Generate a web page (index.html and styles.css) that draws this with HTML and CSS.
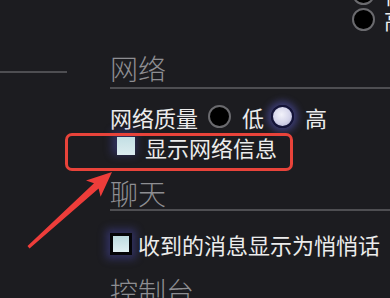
FILE: index.html
```html
<!DOCTYPE html>
<html lang="zh-CN">
<head>
<meta charset="utf-8">
<link rel="stylesheet" href="styles.css">
</head>
<body>
<div class="page">
  <div class="side"><div class="side-line"></div></div>
  <div class="main">
    <div class="prev">
      <div class="prev-row"><span class="radio"></span><span class="prev-label">低</span></div>
      <div class="prev-row"><span class="radio"></span><span class="prev-label">高</span></div>
    </div>

    <div class="section-title st-net">网络</div>
    <div class="row row-quality">
      <span class="label">网络质量</span>
      <span class="radio r1"></span><span class="opt">低</span>
      <span class="radio radio-on r2"></span><span class="opt">高</span>
    </div>
    <div class="row row-netinfo">
      <span class="check check-plain"></span><span class="label">显示网络信息</span>
    </div>

    <div class="section-title st-chat">聊天</div>
    <div class="row row-whisper">
      <span class="check check-box"></span><span class="label">收到的消息显示为悄悄话</span>
    </div>

    <div class="section-title st-console">控制台</div>
  </div>
</div>

<div class="highlight"></div>
<svg class="arrow" width="390" height="298" viewBox="0 0 390 298">
  <polygon points="27.5,246 94,183.3 86,180.4 112,172 100.6,196.8 98.6,188.5 29.5,248.5" fill="#ee3d3a"/>
</svg>
</body>
</html>
```

FILE: styles.css
```css
html, body {
  margin: 0;
  padding: 0;
}
body {
  width: 390px;
  height: 298px;
  overflow: hidden;
  background: #1c1c20;
  font-family: "Noto Sans CJK SC", "Noto Sans", sans-serif;
  color: #ececec;
  position: relative;
}
.page {
  display: flex;
  width: 390px;
}
.side {
  width: 67px;
  flex: none;
  padding-top: 71px;
}
.side-line {
  height: 2px;
  background: #4e4e52;
}
.main {
  margin-left: 43px;
  flex: 1;
  min-width: 0;
}
.prev {
  margin-top: -19px;
  padding-left: 242px;
}
.prev-row {
  height: 25.5px;
  display: flex;
  align-items: center;
  white-space: nowrap;
}
.prev-label {
  font-size: 22px;
  line-height: 22px;
  margin-left: 9px;
}
.radio {
  box-sizing: border-box;
  width: 23px;
  height: 23px;
  border-radius: 50%;
  background: #000;
  border: 2px solid #6a6a6e;
  flex: none;
  display: inline-block;
}
.radio-on {
  background: radial-gradient(circle at 45% 40%, #f2f2fa 0%, #d4d4ea 55%, #a8a8cc 100%);
  border: 2px solid #14143a;
  box-shadow: 0 0 7px 4px rgba(95, 95, 210, 0.45);
}
.section-title {
  font-size: 28px;
  line-height: 28px;
  color: #8e8e92;
  font-weight: 300;
  border-bottom: 2px solid #4e4e52;
  white-space: nowrap;
}
.st-net {
  margin-top: 22px;
  padding-bottom: 5px;
}
.st-chat {
  margin-top: 19.5px;
  padding-bottom: 2.5px;
}
.st-console {
  margin-top: 21px;
  border-bottom: none;
}
.row {
  display: flex;
  align-items: center;
  height: 24px;
  white-space: nowrap;
}
.label {
  font-size: 22px;
  line-height: 24px;
}
.row-quality {
  margin-top: 15.5px;
}
.r1 { margin-left: 10px; }
.r2 { margin-left: 7px; }
.opt {
  font-size: 22px;
  line-height: 24px;
  margin-left: 11px;
}
.row-netinfo {
  margin-top: 6.5px;
  padding-left: 7px;
}
.check {
  box-sizing: border-box;
  flex: none;
  display: inline-block;
}
.check-plain {
  width: 18px;
  height: 18px;
  margin-top: -2px;
  background: linear-gradient(180deg, #c3dfe4 0%, #dcecef 100%);
  box-shadow: -2px -3px 8px 3px rgba(80, 80, 190, 0.4);
  margin-right: 10px;
}
.check-box {
  width: 22px;
  height: 22px;
  border: 3px solid #050508;
  background: linear-gradient(180deg, #bddbe0 0%, #e0eff2 100%);
  box-shadow: 0 0 8px 4px rgba(80, 80, 190, 0.4);
  margin-right: 6px;
}
.row-whisper {
  margin-top: 21px;
}
.highlight {
  position: absolute;
  left: 65px;
  top: 133px;
  width: 228px;
  height: 38px;
  box-sizing: border-box;
  border: 3.5px solid #e8433a;
  border-radius: 7px;
}
.arrow {
  position: absolute;
  left: 0;
  top: 0;
}
```
